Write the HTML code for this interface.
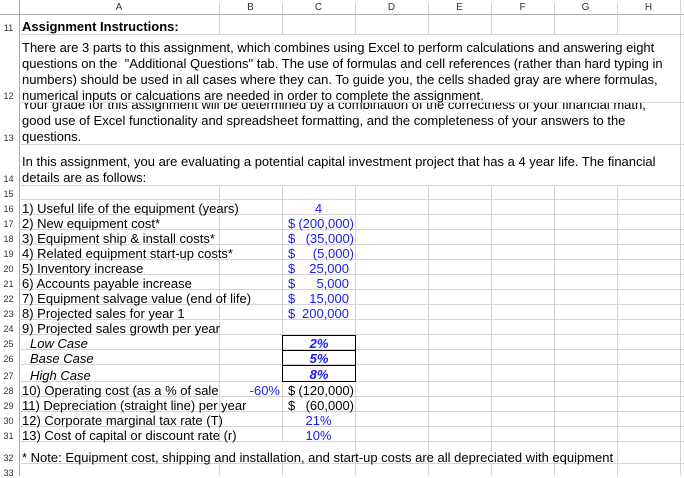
<!DOCTYPE html>
<html><head><meta charset="utf-8"><style>
*{margin:0;padding:0;box-sizing:border-box}
body{width:684px;height:476px;overflow:hidden;background:#fff;font-family:"Liberation Sans",Arial,sans-serif;position:relative;color:#000}
.h{position:absolute;background:#d4d4d4;height:1px}
.v{position:absolute;background:#d4d4d4;width:1px}
.t{position:absolute;white-space:nowrap;font-size:13px;line-height:15px}
.rn{position:absolute;left:0;width:17px;text-align:center;font-size:9px;color:#333;line-height:10px}
.ch{position:absolute;top:2px;font-size:10px;color:#333;text-align:center}
.b{color:#1a1aff}
.box{position:absolute;border:1px solid #000;left:282px;width:74px}
</style></head><body>
<div style="position:absolute;left:0;top:0;width:684px;height:15px;background:#fff;border-bottom:1px solid #ababab"></div>
<div class="v" style="left:19px;top:0;height:476px;background:#ababab"></div>
<div class="ch" style="left:19px;width:200px">A</div>
<div class="ch" style="left:219px;width:63px">B</div>
<div class="ch" style="left:282px;width:73px">C</div>
<div class="ch" style="left:355px;width:73px">D</div>
<div class="ch" style="left:428px;width:63px">E</div>
<div class="ch" style="left:491px;width:63px">F</div>
<div class="ch" style="left:554px;width:63px">G</div>
<div class="ch" style="left:617px;width:63px">H</div>
<div class="v" style="left:219px;top:3px;height:12px"></div><div class="v" style="left:282px;top:3px;height:12px"></div><div class="v" style="left:355px;top:3px;height:12px"></div><div class="v" style="left:428px;top:3px;height:12px"></div><div class="v" style="left:491px;top:3px;height:12px"></div><div class="v" style="left:554px;top:3px;height:12px"></div><div class="v" style="left:617px;top:3px;height:12px"></div><div class="v" style="left:680px;top:0;height:476px"></div>
<div class="v" style="left:219px;top:15px;height:20px"></div><div class="v" style="left:282px;top:15px;height:20px"></div><div class="v" style="left:355px;top:15px;height:20px"></div><div class="v" style="left:428px;top:15px;height:20px"></div><div class="v" style="left:491px;top:15px;height:20px"></div><div class="v" style="left:554px;top:15px;height:20px"></div><div class="v" style="left:617px;top:15px;height:20px"></div>
<div class="v" style="left:219px;top:186px;height:256px"></div><div class="v" style="left:282px;top:186px;height:256px"></div><div class="v" style="left:355px;top:186px;height:290px"></div><div class="v" style="left:428px;top:186px;height:290px"></div><div class="v" style="left:491px;top:186px;height:290px"></div><div class="v" style="left:554px;top:186px;height:290px"></div><div class="v" style="left:617px;top:186px;height:290px"></div>
<div class="v" style="left:219px;top:464px;height:12px"></div><div class="v" style="left:282px;top:464px;height:12px"></div>
<div class="h" style="left:19px;top:34px;width:665px"></div>
<div class="h" style="left:19px;top:102px;width:665px"></div>
<div class="h" style="left:19px;top:144px;width:665px"></div>
<div class="h" style="left:19px;top:185px;width:665px"></div>
<div class="h" style="left:19px;top:199px;width:665px"></div>
<div class="h" style="left:19px;top:214px;width:665px"></div>
<div class="h" style="left:19px;top:229px;width:665px"></div>
<div class="h" style="left:19px;top:244px;width:665px"></div>
<div class="h" style="left:19px;top:259px;width:665px"></div>
<div class="h" style="left:19px;top:274px;width:665px"></div>
<div class="h" style="left:19px;top:289px;width:665px"></div>
<div class="h" style="left:19px;top:304px;width:665px"></div>
<div class="h" style="left:19px;top:319px;width:665px"></div>
<div class="h" style="left:19px;top:334px;width:665px"></div>
<div class="h" style="left:19px;top:349px;width:665px"></div>
<div class="h" style="left:19px;top:364px;width:665px"></div>
<div class="h" style="left:19px;top:381px;width:665px"></div>
<div class="h" style="left:19px;top:396px;width:665px"></div>
<div class="h" style="left:19px;top:411px;width:665px"></div>
<div class="h" style="left:19px;top:426px;width:665px"></div>
<div class="h" style="left:19px;top:441px;width:665px"></div>
<div class="h" style="left:19px;top:463px;width:665px"></div>
<div class="box" style="top:335px;height:16px"></div>
<div class="box" style="top:350px;height:16px"></div>
<div class="box" style="top:365px;height:17px"></div>
<div class="rn" style="top:23px">11</div>
<div class="rn" style="top:91px">12</div>
<div class="rn" style="top:133px">13</div>
<div class="rn" style="top:174px">14</div>
<div class="rn" style="top:189px">15</div>
<div class="rn" style="top:204px">16</div><div class="rn" style="top:219px">17</div><div class="rn" style="top:234px">18</div><div class="rn" style="top:249px">19</div><div class="rn" style="top:264px">20</div><div class="rn" style="top:279px">21</div><div class="rn" style="top:294px">22</div><div class="rn" style="top:309px">23</div><div class="rn" style="top:324px">24</div><div class="rn" style="top:339px">25</div><div class="rn" style="top:354px">26</div><div class="rn" style="top:371px">27</div><div class="rn" style="top:386px">28</div><div class="rn" style="top:401px">29</div><div class="rn" style="top:416px">30</div><div class="rn" style="top:431px">31</div><div class="rn" style="top:453px">32</div><div class="rn" style="top:468px">33</div>
<div class="t" style="left:22px;top:19px;font-weight:bold">Assignment Instructions:</div>
<div class="t" style="left:22px;top:40px;line-height:16px">There are 3 parts to this assignment, which combines using Excel to perform calculations and answering eight<br>questions on the &nbsp;"Additional Questions" tab. The use of formulas and cell references (rather than hard typing in<br>numbers) should be used in all cases where they can. To guide you, the cells shaded gray are where formulas,<br>numerical inputs or calcuations are needed in order to complete the assignment.</div>
<div style="position:absolute;left:20px;top:103px;width:660px;height:41px;overflow:hidden;background:#fff">
<div class="t" style="left:2px;top:-6px;line-height:16px">Your grade for this assignment will be determined by a combination of the correctness of your financial math,<br>good use of Excel functionality and spreadsheet formatting, and the completeness of your answers to the<br>questions.</div></div>
<div class="t" style="left:22px;top:154px;line-height:16px">In this assignment, you are evaluating a potential capital investment project that has a 4 year life. The financial<br>details are as follows:</div>
<div class="t" style="left:22px;top:201px">1) Useful life of the equipment (years)</div>
<div class="t" style="left:22px;top:216px">2) New equipment cost*</div>
<div class="t" style="left:22px;top:231px">3) Equipment ship &amp; install costs*</div>
<div class="t" style="left:22px;top:246px">4) Related equipment start-up costs*</div>
<div class="t" style="left:22px;top:261px">5) Inventory increase</div>
<div class="t" style="left:22px;top:276px">6) Accounts payable increase</div>
<div class="t" style="left:22px;top:291px">7) Equipment salvage value (end of life)</div>
<div class="t" style="left:22px;top:306px">8) Projected sales for year 1</div>
<div class="t" style="left:22px;top:321px">9) Projected sales growth per year</div>
<div class="t" style="left:30px;top:336px;font-style:italic">Low Case</div>
<div class="t" style="left:30px;top:351px;font-style:italic">Base Case</div>
<div class="t" style="left:30px;top:368px;font-style:italic">High Case</div>
<div class="t" style="left:22px;top:383px">10) Operating cost (as a % of sale</div>
<div class="t" style="left:22px;top:398px">11) Depreciation (straight line) per year</div>
<div class="t" style="left:22px;top:413px">12) Corporate marginal tax rate (T)</div>
<div class="t" style="left:22px;top:428px">13) Cost of capital or discount rate (r)</div>
<div class="t" style="left:22px;top:450px">* Note: Equipment cost, shipping and installation, and start-up costs are all depreciated with equipment</div>
<div class="t b" style="left:282px;width:73px;text-align:center;top:201px">4</div>
<div class="t b" style="left:288px;top:216px">$</div><div class="t b" style="left:282px;width:72px;text-align:right;top:216px">(200,000)</div>
<div class="t b" style="left:288px;top:231px">$</div><div class="t b" style="left:282px;width:72px;text-align:right;top:231px">(35,000)</div>
<div class="t b" style="left:288px;top:246px">$</div><div class="t b" style="left:282px;width:72px;text-align:right;top:246px">(5,000)</div>
<div class="t b" style="left:288px;top:261px">$</div><div class="t b" style="left:282px;width:67px;text-align:right;top:261px">25,000</div>
<div class="t b" style="left:288px;top:276px">$</div><div class="t b" style="left:282px;width:67px;text-align:right;top:276px">5,000</div>
<div class="t b" style="left:288px;top:291px">$</div><div class="t b" style="left:282px;width:67px;text-align:right;top:291px">15,000</div>
<div class="t b" style="left:288px;top:306px">$</div><div class="t b" style="left:282px;width:67px;text-align:right;top:306px">200,000</div>
<div class="t b" style="left:282px;width:74px;text-align:center;top:336px;font-weight:bold;font-style:italic">2%</div>
<div class="t b" style="left:282px;width:74px;text-align:center;top:351px;font-weight:bold;font-style:italic">5%</div>
<div class="t b" style="left:282px;width:74px;text-align:center;top:367px;font-weight:bold;font-style:italic">8%</div>
<div class="t b" style="left:219px;width:61px;text-align:right;top:383px">-60%</div>
<div class="t" style="left:288px;top:383px">$</div><div class="t" style="left:282px;width:72px;text-align:right;top:383px">(120,000)</div>
<div class="t" style="left:288px;top:398px">$</div><div class="t" style="left:282px;width:72px;text-align:right;top:398px">(60,000)</div>
<div class="t b" style="left:282px;width:73px;text-align:center;top:413px">21%</div>
<div class="t b" style="left:282px;width:73px;text-align:center;top:428px">10%</div>
</body></html>
